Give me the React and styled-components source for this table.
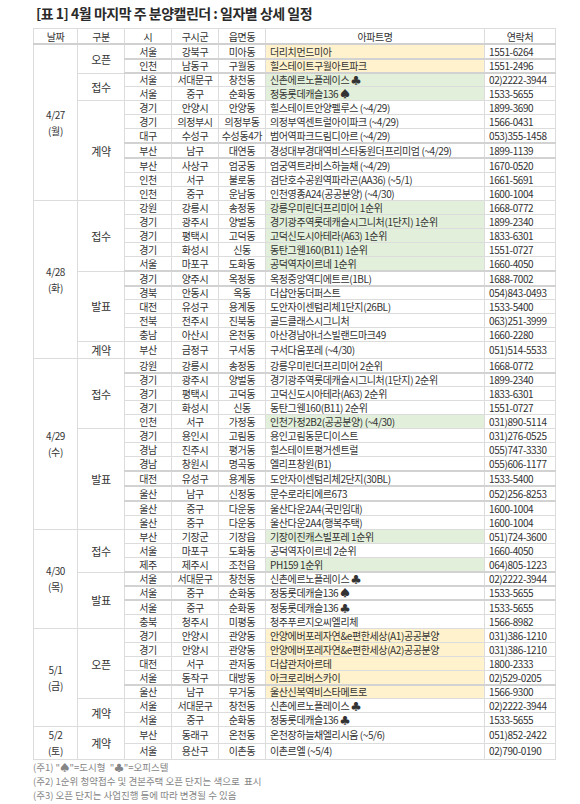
import React from "react";
import styled, { createGlobalStyle } from "styled-components";

const GlobalStyle = createGlobalStyle`
  body {
    margin: 0;
    background: #fff;
    font-family: "Noto Sans CJK KR", "Noto Sans", sans-serif;
    color: #333;
  }
`;

const Page = styled.div`
  width: 580px;
  padding: 5px 0 0 33px;
  box-sizing: border-box;
`;

const Title = styled.h1`
  margin: 0 0 6px 3px;
  font-size: 14px;
  line-height: 17px;
  font-weight: 700;
  color: #2a2a2a;
  letter-spacing: -0.5px;
`;

const Table = styled.table`
  width: 522px;
  border-collapse: collapse;
  table-layout: fixed;
  font-size: 10px;
  letter-spacing: -0.4px;
`;

const Th = styled.th`
  height: 14px;
  padding: 0;
  line-height: 13px;
  font-weight: 400;
  color: #333;
  border: 1px solid #dcdcdc;
  border-bottom: 2px solid #d0d0d0;
  text-align: center;
`;

const Td = styled.td`
  height: ${p => (p.$thick === 1 ? "12px" : "13px")};
  padding: 0;
  padding-left: ${p => (p.$left ? "4px" : "0")};
  line-height: 12px;
  white-space: nowrap;
  overflow: hidden;
  text-align: ${p => (p.$left ? "left" : "center")};
  border: 1px solid #dcdcdc;
  border-top: ${p => (p.$thick ? "2px solid #d2d2d2" : "1px solid #dcdcdc")};
  background: ${p =>
    p.$fill === "y" ? "#fff2cc" : p.$fill === "g" ? "#e2efda" : "#fff"};
`;

const DateCell = styled.td`
  padding: 0;
  text-align: center;
  vertical-align: middle;
  line-height: 16px;
  border: 1px solid #dcdcdc;
`;

const GroupCell = styled.td`
  padding: 0;
  text-align: center;
  vertical-align: middle;
  font-size: 11px;
  border: 1px solid #dcdcdc;
`;

const Notes = styled.div`
  margin-top: 1px;
  display: flex;
  flex-direction: column;
  gap: 1px;
  font-size: 9.5px;
  line-height: 13px;
  color: #858585;
  white-space: pre;
`;

const cols = [44, 47, 47, 47, 47, 219, 71];

// row: [시, 구시군, 읍면동, 아파트명, 연락처, fill, thick]
// thick 1 = double line without extra height, 2 = double line with extra height
const days = [
  {
    date: "4/27",
    dow: "월",
    groups: [
      {
        type: "오픈",
        rows: [
          ["서울", "강북구", "미아동", "더리치먼드미아", "1551-6264", "y"],
          ["인천", "남동구", "구월동", "힐스테이트구월아트파크", "1551-2496", "y", 1],
        ],
      },
      {
        type: "접수",
        rows: [
          ["서울", "서대문구", "창천동", "신촌에르노플레이스 ♣", "02)2222-3944", "g", 1],
          ["서울", "중구", "순화동", "정동롯데캐슬136 ♠", "1533-5655", "g"],
        ],
      },
      {
        type: "계약",
        rows: [
          ["경기", "안양시", "안양동", "힐스테이트안양펠루스 (~4/29)", "1899-3690"],
          ["경기", "의정부시", "의정부동", "의정부역센트럴아이파크 (~4/29)", "1566-0431"],
          ["대구", "수성구", "수성동4가", "범어역파크드림디아르 (~4/29)", "053)355-1458"],
          ["부산", "남구", "대연동", "경성대부경대역비스타동원더프리미엄 (~4/29)", "1899-1139", null, 2],
          ["부산", "사상구", "엄궁동", "엄궁역트라비스하늘채 (~4/29)", "1670-0520", null, 2],
          ["인천", "서구", "불로동", "검단호수공원역파라곤(AA36) (~5/1)", "1661-5691"],
          ["인천", "중구", "운남동", "인천영종A24(공공분양) (~4/30)", "1600-1004"],
        ],
      },
    ],
  },
  {
    date: "4/28",
    dow: "화",
    groups: [
      {
        type: "접수",
        rows: [
          ["강원", "강릉시", "송정동", "강릉우미린더프리미어 1순위", "1668-0772", "g"],
          ["경기", "광주시", "양벌동", "경기광주역롯데캐슬시그니처(1단지) 1순위", "1899-2340", "g"],
          ["경기", "평택시", "고덕동", "고덕신도시아테라(A63) 1순위", "1833-6301", "g"],
          ["경기", "화성시", "신동", "동탄그웬160(B11) 1순위", "1551-0727", "g"],
          ["서울", "마포구", "도화동", "공덕역자이르네 1순위", "1660-4050", "g"],
        ],
      },
      {
        type: "발표",
        thick: 2,
        rows: [
          ["경기", "양주시", "옥정동", "옥정중앙역디에트르(1BL)", "1688-7002"],
          ["경북", "안동시", "옥동", "더샵안동더퍼스트", "054)843-0493", null, 1],
          ["대전", "유성구", "용계동", "도안자이센텀리체1단지(26BL)", "1533-5400"],
          ["전북", "전주시", "진북동", "골드클래스시그니처", "063)251-3999"],
          ["충남", "아산시", "온천동", "아산경남아너스빌랜드마크49", "1660-2280"],
        ],
      },
      {
        type: "계약",
        rows: [["부산", "금정구", "구서동", "구서다움포레 (~4/30)", "051)514-5533"]],
      },
    ],
  },
  {
    date: "4/29",
    dow: "수",
    groups: [
      {
        type: "접수",
        rows: [
          ["강원", "강릉시", "송정동", "강릉우미린더프리미어 2순위", "1668-0772"],
          ["경기", "광주시", "양벌동", "경기광주역롯데캐슬시그니처(1단지) 2순위", "1899-2340", null, 1],
          ["경기", "평택시", "고덕동", "고덕신도시아테라(A63) 2순위", "1833-6301"],
          ["경기", "화성시", "신동", "동탄그웬160(B11) 2순위", "1551-0727"],
          ["인천", "서구", "가정동", "인천가정2B2(공공분양) (~4/30)", "031)890-5114", "g"],
        ],
      },
      {
        type: "발표",
        rows: [
          ["경기", "용인시", "고림동", "용인고림동문디이스트", "031)276-0525"],
          ["경남", "진주시", "평거동", "힐스테이트평거센트럴", "055)747-3330"],
          ["경남", "창원시", "명곡동", "엘리프창원(B1)", "055)606-1177"],
          ["대전", "유성구", "용계동", "도안자이센텀리체2단지(30BL)", "1533-5400", null, 2],
          ["울산", "남구", "신정동", "문수로라티에르673", "052)256-8253", null, 2],
          ["울산", "중구", "다운동", "울산다운2A4(국민임대)", "1600-1004", null, 2],
          ["울산", "중구", "다운동", "울산다운2A4(행복주택)", "1600-1004"],
        ],
      },
    ],
  },
  {
    date: "4/30",
    dow: "목",
    groups: [
      {
        type: "접수",
        rows: [
          ["부산", "기장군", "기장읍", "기장이진캐스빌포레 1순위", "051)724-3600", "g"],
          ["서울", "마포구", "도화동", "공덕역자이르네 2순위", "1660-4050"],
          ["제주", "제주시", "조천읍", "PH159 1순위", "064)805-1223", "g"],
        ],
      },
      {
        type: "발표",
        thick: 1,
        rows: [
          ["서울", "서대문구", "창천동", "신촌에르노플레이스 ♣", "02)2222-3944"],
          ["서울", "중구", "순화동", "정동롯데캐슬136 ♠", "1533-5655", null, 1],
          ["서울", "중구", "순화동", "정동롯데캐슬136 ♣", "1533-5655", null, 2],
          ["충북", "청주시", "미평동", "청주푸르지오씨엘리체", "1566-8982"],
        ],
      },
    ],
  },
  {
    date: "5/1",
    dow: "금",
    groups: [
      {
        type: "오픈",
        rows: [
          ["경기", "안양시", "관양동", "안양에버포레자연&e편한세상(A1)공공분양", "031)386-1210", "y"],
          ["경기", "안양시", "관양동", "안양에버포레자연&e편한세상(A2)공공분양", "031)386-1210", "y"],
          ["대전", "서구", "관저동", "더샵관저아르테", "1800-2333", "y"],
          ["서울", "동작구", "대방동", "아크로리버스카이", "02)529-0205", "y"],
          ["울산", "남구", "무거동", "울산신복역비스타메트로", "1566-9300", "y", 1],
        ],
      },
      {
        type: "계약",
        rows: [
          ["서울", "서대문구", "창천동", "신촌에르노플레이스 ♣", "02)2222-3944"],
          ["서울", "중구", "순화동", "정동롯데캐슬136 ♣", "1533-5655"],
        ],
      },
    ],
  },
  {
    date: "5/2",
    dow: "토",
    groups: [
      {
        type: "계약",
        rows: [
          ["부산", "동래구", "온천동", "온천장하늘채엘리시움 (~5/6)", "051)852-2422"],
          ["서울", "용산구", "이촌동", "이촌르엘 (~5/4)", "02)790-0190"],
        ],
      },
    ],
  },
];

const headers = ["날짜", "구분", "시", "구시군", "읍면동", "아파트명", "연락처"];

function DayRows({ day }) {
  const total = day.groups.reduce((n, g) => n + g.rows.length, 0);
  const out = [];
  day.groups.forEach((g, gi) => {
    g.rows.forEach((r, ri) => {
      const [si, gu, dong, name, tel, fill, thick] = r;
      const t = thick || (ri === 0 ? g.thick : 0) || 0;
      out.push(
        <tr key={`${gi}-${ri}`}>
          {gi === 0 && ri === 0 && (
            <DateCell rowSpan={total}>
              {day.date}
              <br />({day.dow})
            </DateCell>
          )}
          {ri === 0 && <GroupCell rowSpan={g.rows.length}>{g.type}</GroupCell>}
          <Td $thick={t}>{si}</Td>
          <Td $thick={t}>{gu}</Td>
          <Td $thick={t}>{dong}</Td>
          <Td $thick={t} $left $fill={fill}>{name}</Td>
          <Td $thick={t} $left>{tel}</Td>
        </tr>
      );
    });
  });
  return out;
}

export default function App() {
  return (
    <Page>
      <GlobalStyle />
      <Title>[표 1] 4월 마지막 주 분양캘린더 : 일자별 상세 일정</Title>
      <Table>
        <colgroup>
          {cols.map((w, i) => (
            <col key={i} style={{ width: w }} />
          ))}
        </colgroup>
        <thead>
          <tr>
            {headers.map(h => (
              <Th key={h}>{h}</Th>
            ))}
          </tr>
        </thead>
        <tbody>
          {days.map(d => (
            <DayRows key={d.date} day={d} />
          ))}
        </tbody>
      </Table>
      <Notes>
        <span>(주1) "♠"=도시형  "♣"=오피스텔</span>
        <span>(주2) 1순위 청약접수 및 견본주택 오픈 단지는 색으로  표시</span>
        <span>(주3) 오픈 단지는 사업진행 등에 따라 변경될 수 있음</span>
      </Notes>
    </Page>
  );
}
